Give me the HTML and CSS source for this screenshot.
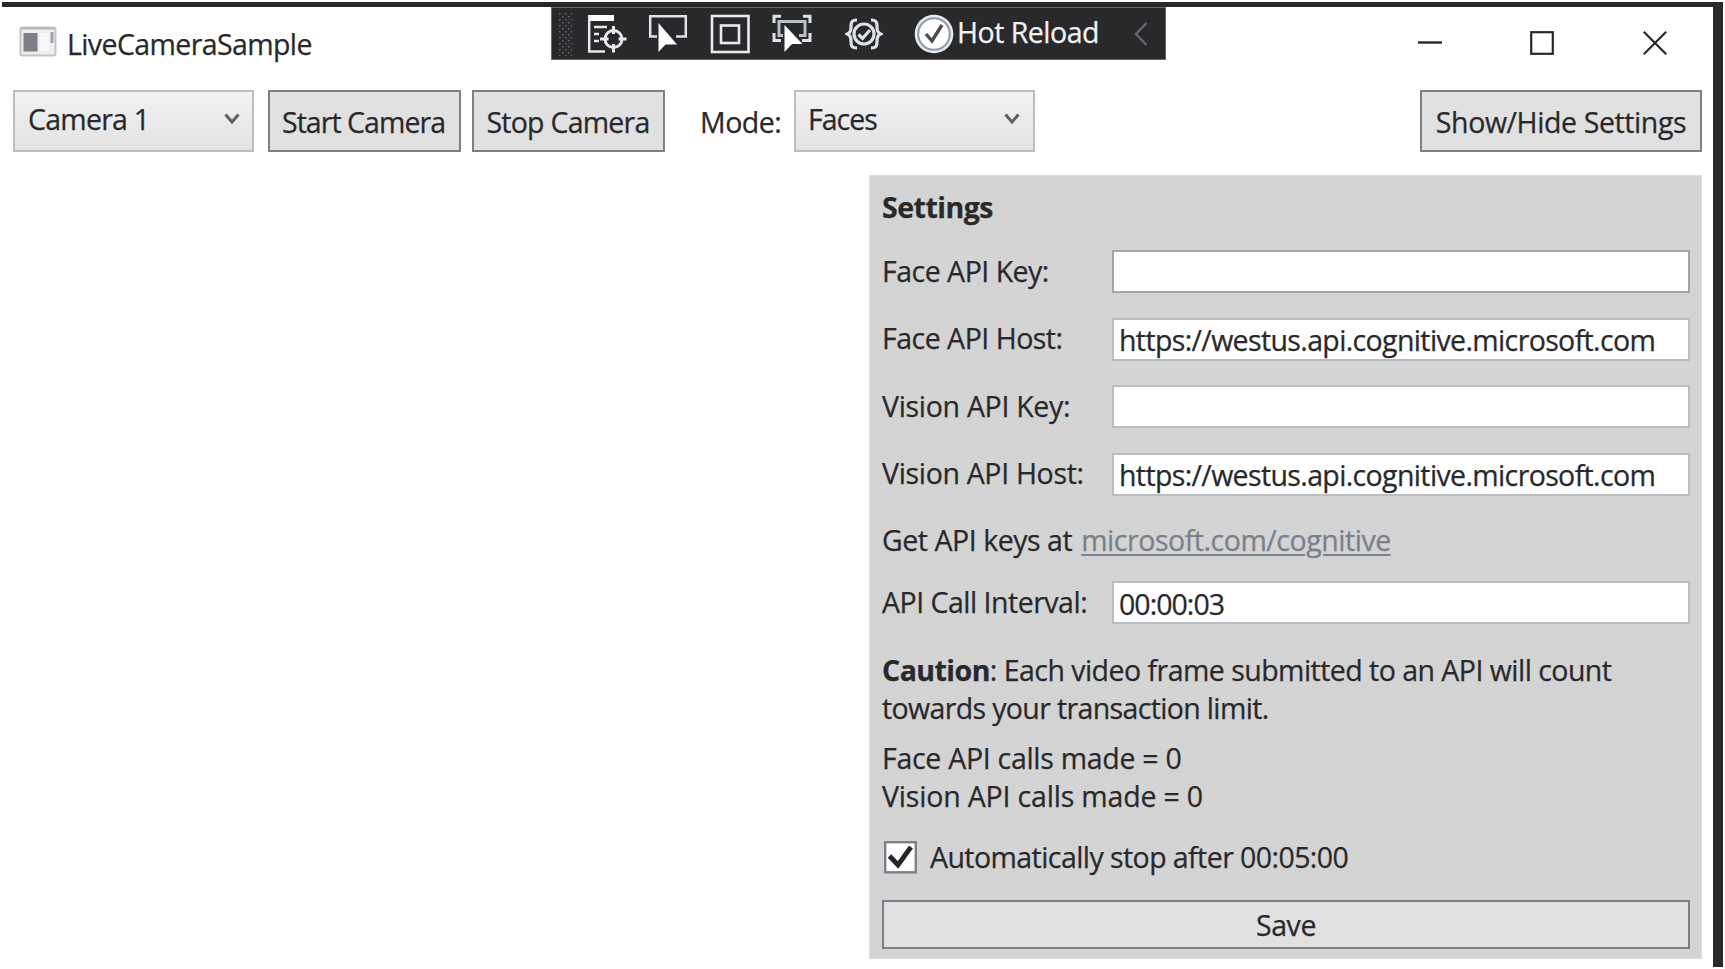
FILE: index.html
```html
<!DOCTYPE html>
<html lang="en">
<head>
<meta charset="utf-8">
<title>LiveCameraSample</title>
<link rel="stylesheet" href="styles.css">
</head>
<body>
<div class="window">
  <header class="titlebar">
    <svg class="app-icon" width="38" height="32" viewBox="0 0 38 32"><rect x="1.500" y="1.500" width="35" height="28" rx="2" fill="#efefef" stroke="#c2c3c6" stroke-width="2"/><path d="M2 2.500H36" stroke="#b4b7bc" stroke-width="2"/><rect x="4.500" y="7" width="14" height="18.500" fill="#7c7f87"/><path d="M21 7H30V25H21Z" fill="#f8f8f8"/><path d="M33 6V17" stroke="#9ca3ac" stroke-width="3"/></svg>
    <span class="app-title"><span class="t t-app">LiveCameraSample</span></span>
    <div class="controls">
      <svg width="24" height="24" viewBox="0 0 24 24"><path d="M0 11.500H24" stroke="#28282a" stroke-width="2.400"/></svg>
      <svg width="24" height="24" viewBox="0 0 24 24"><rect x="1.200" y="1.200" width="21.600" height="21.600" fill="none" stroke="#28282a" stroke-width="2.200"/></svg>
      <svg width="24" height="24" viewBox="0 0 24 24"><path d="M.8.8 23.200 23.200M23.200.8.8 23.200" stroke="#28282a" stroke-width="2.200"/></svg>
    </div>
  </header>

  <div class="debug-bar">
    <svg class="grip" width="16" height="44" viewBox="0 0 16 44"><defs><pattern id="dots" width="6" height="6" patternUnits="userSpaceOnUse"><path d="M1 1h1.500v1.500H1zM4 4h1.500v1.500H4z" fill="#69696d"/></pattern></defs><rect width="14" height="44" fill="url(#dots)"/></svg>
    <svg class="i-tree" width="40" height="42" viewBox="0 0 40 42" fill="none" stroke="#e6e8eb" stroke-width="2.500"><path d="M1 2H27V8H1Z" fill="#fff" stroke="none"/><path d="M2.200 3V38.500H18M7 14H20M7 21H12M7 28H12"/><circle cx="26.500" cy="26" r="8.500" stroke-width="3"/><path d="M26.500 13V21M26.500 31V39.500M13 26H21.500M31.500 26H39.500" stroke-width="3"/></svg>
    <svg class="i-select" width="40" height="42" viewBox="0 0 40 42"><path d="M9 23.500H2.200V3.200H37.800V23.500H28" fill="none" stroke="#e0e3e7" stroke-width="2.500"/><path d="M10.500 10V39L17.500 31.500H29Z" fill="#fff"/></svg>
    <svg class="i-adorner" width="40" height="42" viewBox="0 0 40 42" fill="none" stroke="#e8eaed" stroke-width="2.600"><rect x="2" y="3" width="36.500" height="36"/><rect x="11" y="12.500" width="18" height="17.500"/></svg>
    <svg class="i-focus" width="40" height="42" viewBox="0 0 40 42"><g fill="none" stroke="#dfe2e6" stroke-width="3"><path d="M2 10V3.200H9M31 3.200H38V10M38 20V27.500H30M9 27.500H2V20"/><path d="M11 22.500H7V8.500H33V22.500H27" stroke="#b7c0ca"/></g><path d="M12.500 12V39L20 31H30.500Z" fill="#fff"/></svg>
    <svg class="i-binding" width="38" height="36" viewBox="0 0 38 36" fill="none" stroke="#dfe3e8" stroke-width="3.200"><path d="M12 4C6 4 6 7 6 11C6 15 5 17 2.500 18C5 19 6 21 6 25C6 29 6 32 12 32"/><path d="M26 4C32 4 32 7 32 11C32 15 33 17 35.500 18C33 19 32 21 32 25C32 29 32 32 26 32"/><circle cx="19" cy="18" r="10"/><path d="M13.500 18.500 17.500 22.500 25 14"/></svg>
    <svg class="i-reload" width="40" height="40" viewBox="0 0 40 40"><circle cx="20" cy="20" r="19.300" fill="#e7eaed"/><circle cx="20" cy="20" r="15.800" fill="#fff" stroke="#909aa5" stroke-width="2"/><path d="M12 20 18 27 28 11" fill="none" stroke="#4b4b50" stroke-width="3.400"/></svg>
    <span class="t t-hot">Hot Reload</span>
    <svg class="i-collapse" width="14" height="24" viewBox="0 0 14 24"><path d="M12.500 1 2 12 12.500 23" fill="none" stroke="#67676b" stroke-width="2.400"/></svg>
  </div>

  <div class="toolbar">
    <div class="select"><span class="t t-cam">Camera 1</span><svg width="16" height="12" viewBox="0 0 16 12"><path d="M1.500 1.500 8 9 14.500 1.500" fill="none" stroke="#5c5e64" stroke-width="3"/></svg></div>
    <button class="btn start"><span class="t t-start">Start Camera</span></button>
    <button class="btn stop"><span class="t t-stop">Stop Camera</span></button>
    <label class="mode"><span class="t t-mode">Mode:</span></label>
    <div class="select faces"><span class="t t-faces">Faces</span><svg width="16" height="12" viewBox="0 0 16 12"><path d="M1.500 1.500 8 9 14.500 1.500" fill="none" stroke="#5c5e64" stroke-width="3"/></svg></div>
    <button class="btn toggle"><span class="t t-show">Show/Hide Settings</span></button>
  </div>

  <section class="settings">
    <h2><span class="t t-set">Settings</span></h2>
    <div class="row"><label><span class="t t-fk">Face API Key:</span></label><div class="field active"></div></div>
    <div class="row"><label><span class="t t-fh">Face API Host:</span></label><div class="field"><span class="t t-url">https://westus.api.cognitive.microsoft.com</span></div></div>
    <div class="row"><label><span class="t t-vk">Vision API Key:</span></label><div class="field"></div></div>
    <div class="row"><label><span class="t t-vh">Vision API Host:</span></label><div class="field"><span class="t t-url">https://westus.api.cognitive.microsoft.com</span></div></div>
    <p class="keys"><span class="t t-get">Get API keys at</span><a class="t t-link">microsoft.com/cognitive</a></p>
    <div class="row interval"><label><span class="t t-int">API Call Interval:</span></label><div class="field"><span class="t t-time">00:00:03</span></div></div>
    <p class="caution"><span class="t t-c1"><b>Caution</b>: Each video frame submitted to an API will count</span><br><span class="t t-c2">towards your transaction limit.</span></p>
    <p class="calls"><span class="t t-n1">Face API calls made = 0</span><br><span class="t t-n2">Vision API calls made = 0</span></p>
    <div class="auto"><svg width="33" height="33" viewBox="0 0 33 33"><rect x="1.200" y="1.200" width="30.600" height="30.100" fill="#fff" stroke="#7b818a" stroke-width="2.400"/><path d="M5.500 15 14 24 27 6" fill="none" stroke="#252527" stroke-width="4.800"/></svg><span class="t t-auto">Automatically stop after 00:05:00</span></div>
    <button class="btn save"><span class="t t-save">Save</span></button>
  </section>
</div>
</body>
</html>
```
FILE: styles.css
```css
* { box-sizing: border-box; }
body { margin: 0; background: #fff; color: #29292b; font: 28.500px/38px "Open Sans", "Noto Sans", sans-serif; overflow: hidden; }
h2, p { margin: 0; }
button { font: inherit; color: inherit; padding: 0; margin: 0; }
svg { display: block; flex: none; }
.t { white-space: nowrap; -webkit-text-stroke: .25px currentColor; }

.window { position: relative; width: 1721px; height: 965px; margin: 2px 0 0 2px; border-top: 5px solid #29292b; border-right: 10px solid #29292b; }
.titlebar { height: 83px; display: flex; align-items: flex-start; padding: 19px 46px 0 17px; }
.app-title { margin: -1px 0 0 10px; }
.controls { margin-left: auto; display: flex; gap: 89px; padding-top: 5px; }
.controls svg:first-child { margin-right: -1px; }

.debug-bar { position: absolute; left: 549px; top: 0; width: 615px; height: 53px; background: #29292b; border: 1px solid #68686c; display: flex; align-items: center; padding-left: 6px; color: #f1f2f4; }
.i-tree { margin-left: 13px; }
.i-select { margin-left: 21px; }
.i-adorner { margin-left: 22px; }
.i-focus { margin-left: 22px; }
.i-binding { margin-left: 33px; }
.i-reload { margin-left: 31px; }
.t-hot { margin: 0 0 3px 3px; }
.i-collapse { margin-left: auto; margin-right: 17px; }

.toolbar { height: 62px; display: flex; padding: 0 11px 0 11px; }
.select { width: 241px; height: 62px; border: 2px solid #bdbec1; background: linear-gradient(#f2f2f2, #e3e3e3); display: flex; align-items: center; justify-content: space-between; padding: 0 12px 4px 13px; }
.faces { padding: 0 13px 4px 12px; }
.btn { height: 62px; border: 2px solid #7b818a; background: #e1e1e1; display: flex; align-items: center; justify-content: center; border-radius: 0; }
.start { width: 193px; margin-left: 14px; padding: 1px 2px 0 0; }
.stop { width: 193px; margin-left: 11px; padding: 1px 1px 0 0; }
.mode { width: 129px; padding: 13px 0 0 35px; }
.toggle { width: 282px; margin-left: auto; padding-top: 1px; }

.settings { width: 833px; height: 784px; margin: 23px 11px 0 auto; background: #d4d4d4; padding: 12px 11px 0 12px; border: 1px solid #dedede; }
h2 { font-size: inherit; margin-bottom: 24px; }
.row { display: grid; grid-template-columns: 230px 1fr; height: 43px; margin-bottom: 24.500px; }
.row label { padding-top: 1.500px; }
.field { height: 43px; border: 2px solid #babdc1; background: #fff; padding: 2px 0 0 5px; display: flex; align-items: center; }
.field.active { border-color: #9da5ae; }
.keys { height: 38px; margin-bottom: 22px; padding-top: 1px; display: flex; }
.t-link { margin-left: 9px; color: #7b818b; text-decoration: underline; text-underline-offset: 3px; text-decoration-thickness: 2px; }
.keys + .interval { margin: 0 0 27px; padding-top: 1px; height: 44px; }
.caution { margin-bottom: 12px; }
.calls { margin-bottom: 23px; }
.auto { display: flex; height: 38px; margin-bottom: 24px; padding-left: 2px; }
.auto svg { margin-top: 3px; }
.t-auto { margin-left: 13px; }
.save { width: 100%; height: 49px; padding-top: 1px; }

/* letter fitting */
.t-app { letter-spacing: -.6px; }
.t-hot { letter-spacing: -.5px; }
.t-cam { letter-spacing: -.75px; }
.t-start { letter-spacing: -.95px; }
.t-stop { letter-spacing: -.75px; }
.t-mode { letter-spacing: -.5px; }
.t-faces { letter-spacing: -1px; }
.t-show, .t-save { letter-spacing: -.4px; }
.t-set { letter-spacing: -.5px; }
.t-fk, .t-int { letter-spacing: -.5px; }
.t-fh { letter-spacing: -.5px; }
.t-url { letter-spacing: -.63px; }
.t-vk { letter-spacing: -.3px; }
.t-vh { letter-spacing: -.33px; }
.t-get, .t-link { letter-spacing: -.46px; }
.t-time { letter-spacing: -.96px; }
.t-c1 { letter-spacing: -.53px; }
.t-c2 { letter-spacing: -.64px; }
.t-n1 { letter-spacing: -.29px; }
.t-n2 { letter-spacing: -.18px; }
.t-auto { letter-spacing: -.57px; }
```
